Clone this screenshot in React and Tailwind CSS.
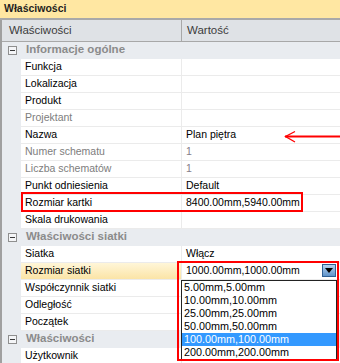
import React from "react";

const rows1 = [
  { label: "Funkcja" },
  { label: "Lokalizacja" },
  { label: "Produkt" },
  { label: "Projektant", muted: true },
  { label: "Nazwa", value: "Plan piętra" },
  { label: "Numer schematu", muted: true, value: "1", valueMuted: true },
  { label: "Liczba schematów", muted: true, value: "1", valueMuted: true },
  { label: "Punkt odniesienia", value: "Default" },
  { label: "Rozmiar kartki", value: "8400.00mm,5940.00mm" },
  { label: "Skala drukowania" },
];

const rows2 = [
  { label: "Siatka", value: "Włącz" },
  { label: "Rozmiar siatki", selected: true, combo: true },
  { label: "Współczynnik siatki" },
  { label: "Odległość" },
  { label: "Początek" },
];

const rows3 = [{ label: "Użytkownik" }];

const options = [
  "5.00mm,5.00mm",
  "10.00mm,10.00mm",
  "25.00mm,25.00mm",
  "50.00mm,50.00mm",
  "100.00mm,100.00mm",
  "200.00mm,200.00mm",
];

const Group = ({ title }) => (
  <div className="flex h-[17px] items-center bg-[#e9ecf0] border-b border-[#e9ecf0]">
    <div className="w-[19px] flex items-center justify-center pl-[2px]">
      <div className="w-[9px] h-[9px] border border-[#8f8f8f] bg-[#f4f5f7] flex items-center justify-center">
        <div className="w-[5px] h-px bg-[#3a3a3a]" />
      </div>
    </div>
    <div className="pl-[5px] font-bold text-[11.5px] text-[#8b8b8b]">{title}</div>
  </div>
);

const Row = ({ label, value, muted, valueMuted, selected, combo }) => (
  <div className="flex h-[17px]">
    <div className="w-[19px] shrink-0 bg-[#e9ecf0]" />
    <div
      className={`w-[160px] shrink-0 pl-[4px] flex items-center border-b border-[#ebebeb] ${
        selected ? "bg-gradient-to-b from-[#fff6d8] to-[#fbe4a6]" : "bg-white"
      } ${muted ? "text-[#7d7d7d]" : "text-black"}`}
    >
      {label}
    </div>
    <div className="w-px shrink-0 bg-[#ebebeb]" />
    <div
      className={`flex-1 pl-[4px] flex items-center bg-white border-b border-[#ebebeb] relative ${
        valueMuted ? "text-[#857d8a]" : "text-black"
      }`}
    >
      {value}
      {combo && (
        <>
          <span>1000.00mm,1000.00mm</span>
          <div className="absolute left-[140px] top-[1px] w-[14px] h-[13px] border border-[#2f5f93] bg-gradient-to-b from-[#b7d3ef] to-[#5f93c9] flex items-center justify-center">
            <svg width="8" height="5" viewBox="0 0 8 5">
              <path d="M0 0H8L4 5Z" fill="#000" />
            </svg>
          </div>
          <div className="absolute left-[-1px] top-[17px] w-[156px] border border-[#222] bg-white z-10 text-[10.8px]">
            {options.map((o, i) => (
              <div
                key={o}
                className={`h-[13px] leading-[13px] pl-[2px] ${
                  i === 4 ? "bg-[#3399ff] text-white" : "text-black"
                }`}
              >
                {o}
              </div>
            ))}
          </div>
          <div className="absolute left-[-5px] top-[-2px] w-[162px] h-[100px] border-2 border-[#ff0000] z-20 pointer-events-none" />
        </>
      )}
    </div>
  </div>
);

export default function App() {
  return (
    <div
      className="w-[340px] h-[363px] overflow-hidden bg-white text-[10.5px] relative"
      style={{ fontFamily: '"Liberation Sans", Arial, sans-serif' }}
    >
      {/* Title bar */}
      <div className="h-[18px] bg-[#ffe7a2] flex items-center pl-[4px] font-bold text-[#1e1e1e]">
        Właściwości
      </div>
      <div className="h-[2px] bg-[#a9a9a9]" />

      <div className="border-l-2 border-[#a0a0a0]">
        {/* Header */}
        <div className="flex h-[22px] bg-[#dfe2e6] border-b border-[#a8a8a8] text-[11.5px] text-[#3c3c3c]">
          <div className="w-[179px] pl-[7px] flex items-center">Właściwości</div>
          <div className="w-px bg-[#a8a8a8]" />
          <div className="flex-1 pl-[5px] flex items-center">Wartość</div>
        </div>

        <Group title="Informacje ogólne" />
        {rows1.map((r) => (
          <Row key={r.label} {...r} />
        ))}
        <Group title="Właściwości siatki" />
        {rows2.map((r) => (
          <Row key={r.label} {...r} />
        ))}
        <Group title="Właściwości" />
        {rows3.map((r) => (
          <Row key={r.label} {...r} />
        ))}
      </div>

      {/* Annotation: box around Rozmiar kartki */}
      <div className="absolute left-[21px] top-[192px] w-[282px] h-[20px] border-2 border-[#ff0000] pointer-events-none" />

      {/* Annotation: arrow pointing at Nazwa */}
      <svg className="absolute left-[283px] top-[129px]" width="57" height="15" viewBox="0 0 57 15">
        <path d="M2 7.5H57" stroke="#ff0000" strokeWidth="2" />
        <path d="M12 2.5L2.5 7.5L12 13" stroke="#ff0000" strokeWidth="1.3" fill="none" />
      </svg>
    </div>
  );
}
